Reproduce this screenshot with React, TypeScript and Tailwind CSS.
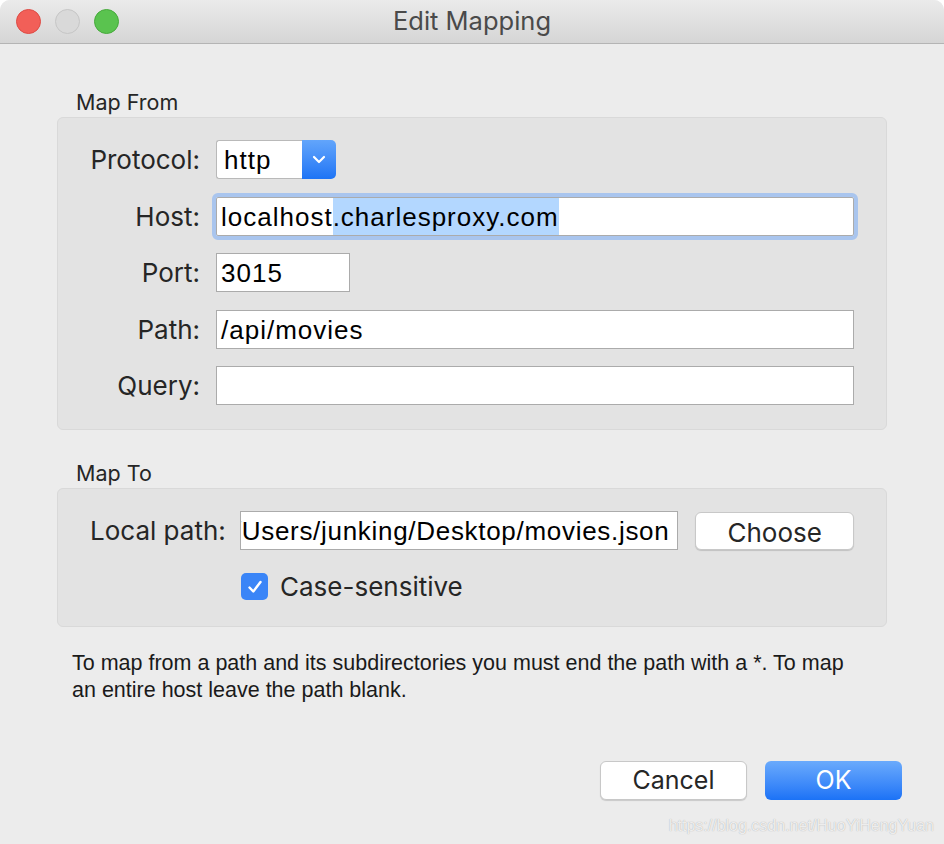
import React from 'react';

const sf = "font-['Inter','Noto_Sans',sans-serif]";
const hv = "font-['Liberation_Sans','Arial',sans-serif]";

function Field({ w, children, focused }: { w?: string; children?: React.ReactNode; focused?: boolean }) {
  return (
    <div
      className={
        'h-[39px] bg-white border border-[#ababab] flex items-center px-[4px] pt-[2px] overflow-hidden whitespace-nowrap text-[26px] tracking-[1px] text-black ' +
        hv +
        ' ' +
        (w ?? 'w-full') +
        (focused ? ' outline outline-[4px] outline-[#a9c5ee] rounded-[2px]' : '')
      }
    >
      {children}
    </div>
  );
}

function Label({ children }: { children: React.ReactNode }) {
  return <div className={'h-[39px] flex items-center justify-end text-[26px] text-[#262626] ' + sf}>{children}</div>;
}

export default function App() {
  return (
    <div className="w-[944px] h-[844px] bg-white">
      <div className="relative w-[944px] h-[844px] bg-[#ececec] rounded-t-[10px] overflow-hidden flex flex-col">
        {/* title bar */}
        <div className="h-[44px] shrink-0 bg-gradient-to-b from-[#ebebeb] to-[#d5d5d5] border-b border-[#b4b4b4] flex items-center relative">
          <div className="flex items-center gap-[14px] pl-[16px]">
            <span className="w-[25px] h-[25px] rounded-full bg-[#f25f58] border border-[#dd4b44]" />
            <span className="w-[25px] h-[25px] rounded-full bg-[#d9d9d9] border border-[#c5c5c5]" />
            <span className="w-[25px] h-[25px] rounded-full bg-[#5ac34f] border border-[#46a93b]" />
          </div>
          <div className={'absolute inset-0 flex items-center justify-center text-[25.5px] text-[#4a4a4a] ' + sf}>Edit Mapping</div>
        </div>

        <div className="px-[57px] flex flex-col">
          {/* Map From */}
          <div className={'mt-[46px] pl-[19px] text-[21.5px] leading-[24px] text-[#262626] ' + sf}>Map From</div>
          <div className="mt-[3px] bg-[#e3e3e3] border border-[#d9d9d9] rounded-[6px] pt-[22px] pb-[24px] pr-[32px]">
            <div className="grid grid-cols-[142px_1fr] gap-x-[16px] gap-y-[17.5px]">
              <Label>Protocol:</Label>
              <div className="flex h-[39px] w-[120px]">
                <div className={'flex-1 bg-white border border-[#b9b9b9] border-r-0 rounded-l-[3px] flex items-center pl-[7px] pt-[2px] text-[26px] tracking-[1px] text-black ' + hv}>
                  http
                </div>
                <div className="w-[34px] rounded-r-[5px] bg-gradient-to-b from-[#62a5fb] to-[#1d74f5] flex items-center justify-center">
                  <svg width="14" height="9" viewBox="0 0 14 9" fill="none">
                    <path d="M2 2l5 5 5-5" stroke="white" strokeWidth="2.2" strokeLinecap="round" strokeLinejoin="round" />
                  </svg>
                </div>
              </div>

              <Label>Host:</Label>
              <Field focused>
                <span>localhost</span>
                <span className="bg-[#b3d7ff]">.charlesproxy.com</span>
              </Field>

              <Label>Port:</Label>
              <Field w="w-[134px]">3015</Field>

              <Label>Path:</Label>
              <Field>/api/movies</Field>

              <Label>Query:</Label>
              <Field />
            </div>
          </div>

          {/* Map To */}
          <div className={'mt-[31px] pl-[19px] text-[21.5px] leading-[24px] text-[#262626] ' + sf}>Map To</div>
          <div className="mt-[3px] bg-[#e3e3e3] border border-[#d9d9d9] rounded-[6px] pt-[22px] pb-[26px] pl-[32px] pr-[32px]">
            <div className="flex items-center">
              <div className={'w-[150px] text-[26px] text-[#262626] ' + sf}>Local path:</div>
              <div className={'w-[440px] h-[39px] bg-white border border-[#ababab] flex items-center justify-end pr-[8px] pt-[2px] overflow-hidden whitespace-nowrap text-[26px] tracking-[0.7px] text-black ' + hv}>
                <span className="shrink-0">/Users/junking/Desktop/movies.json</span>
              </div>
              <button className={'ml-[17px] w-[159px] h-[38px] bg-white rounded-[6px] border border-[#c8c8c8] shadow-[0_1px_1px_rgba(0,0,0,0.15)] text-[26px] text-[#262626] ' + sf}>
                Choose
              </button>
            </div>
            <div className="mt-[23px] ml-[151px] h-[27px] flex items-center gap-[12px]">
              <span className="w-[27px] h-[27px] rounded-[5px] bg-[#3a85f7] flex items-center justify-center">
                <svg width="16" height="14" viewBox="0 0 16 14" fill="none">
                  <path d="M2.5 7.5l3.8 4L13.5 2" stroke="white" strokeWidth="2.4" strokeLinecap="round" strokeLinejoin="round" />
                </svg>
              </span>
              <span className={'text-[26px] leading-[27px] text-[#262626] ' + sf}>Case-sensitive</span>
            </div>
          </div>

          <p className={'mt-[23px] pl-[15px] text-[21.5px] leading-[27px] text-[#1a1a1a] ' + hv}>
            To map from a path and its subdirectories you must end the path with a *. To map
            <br />
            an entire host leave the path blank.
          </p>
        </div>

        <div className="mt-auto mb-[44px] flex justify-end gap-[18px] pr-[42px]">
          <button className={'w-[147px] h-[39px] bg-white rounded-[6px] border border-[#c8c8c8] shadow-[0_1px_1px_rgba(0,0,0,0.15)] text-[25px] text-[#262626] ' + sf}>
            Cancel
          </button>
          <button className={'w-[137px] h-[39px] rounded-[6px] bg-gradient-to-b from-[#6aaafc] to-[#1b72f6] text-[25px] text-white ' + sf}>
            OK
          </button>
        </div>

        <div className={'absolute right-[10px] bottom-[6px] text-[16px] text-white/80 [text-shadow:0_0_1px_rgba(0,0,0,0.35)] ' + hv}>
          https://blog.csdn.net/HuoYiHengYuan
        </div>
      </div>
    </div>
  );
}
